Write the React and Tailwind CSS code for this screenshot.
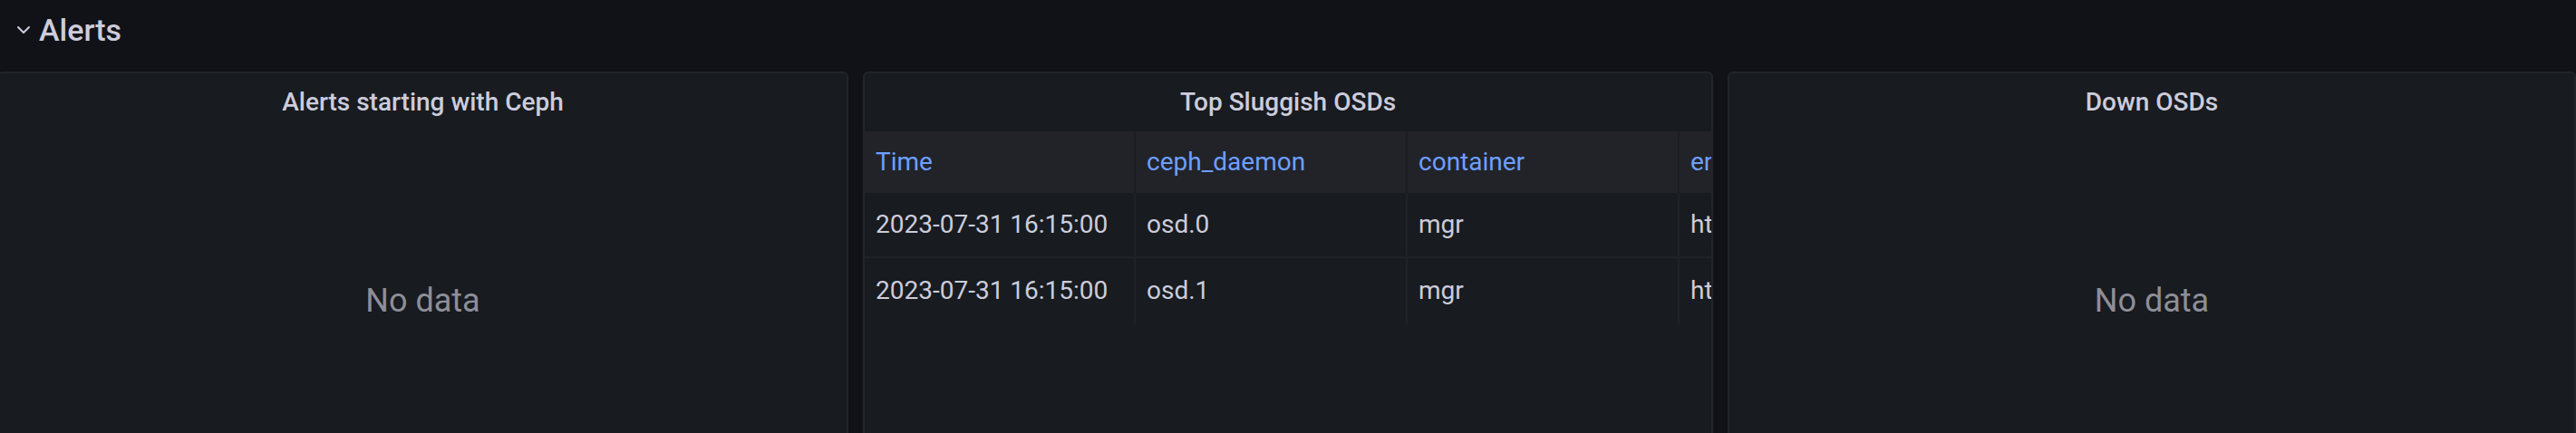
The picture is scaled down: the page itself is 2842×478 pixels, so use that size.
import React from "react";

const columns = ["Time", "ceph_daemon", "container", "endpoint"];

const rows = [
  ["2023-07-31 16:15:00", "osd.0", "mgr", "http://ceph-mgr:9283/metrics"],
  ["2023-07-31 16:15:00", "osd.1", "mgr", "http://ceph-mgr:9283/metrics"],
];

function Chevron() {
  return (
    <svg width="16" height="10" viewBox="0 0 16 10" fill="none" className="shrink-0">
      <path d="M2 2 L8 8 L14 2" stroke="#ccccdc" strokeWidth="2" strokeLinecap="round" strokeLinejoin="round" />
    </svg>
  );
}

function Panel({ title, children }) {
  return (
    <div className="h-[436px] flex flex-col overflow-hidden rounded-[6px] border-2 border-[#222429] bg-[#181b1f]">
      <div className="h-[64px] shrink-0 flex items-center justify-center text-[28px] font-medium text-[#ccccdc]">
        {title}
      </div>
      {children}
    </div>
  );
}

function NoData() {
  return (
    <div className="flex-1 pt-[5px] flex items-center justify-center text-[36px] text-[#8e8e98]">No data</div>
  );
}

function SluggishTable() {
  return (
    <div className="flex-1 overflow-hidden">
      <div className="w-[1200px]">
        {/* header */}
        <div className="flex h-[68px] bg-[#212329]">
          {columns.map((c, i) => (
            <div
              key={c}
              className={
                (i === 0 ? "w-[299px] " : "w-[300px] ") +
                "shrink-0 flex items-center pl-[12px] border-r-2 border-[#1b1d22] text-[28px] text-[#6e9fff]"
              }
            >
              {c}
            </div>
          ))}
        </div>
        {/* body */}
        {rows.map((r, ri) => (
          <div
            key={ri}
            className={"flex h-[72px] " + (ri === 0 ? "border-b-2 border-[#202227]" : "")}
          >
            {r.map((v, i) => (
              <div
                key={i}
                className={
                  (i === 0 ? "w-[299px] " : "w-[300px] ") +
                  "shrink-0 flex items-center pl-[12px] border-r-2 border-[#202227] text-[28px] text-[#ccccdc] whitespace-nowrap overflow-hidden"
                }
              >
                {v}
              </div>
            ))}
          </div>
        ))}
      </div>
    </div>
  );
}

export default function App() {
  return (
    <div
      className="w-[2842px] h-[478px] overflow-hidden bg-[#111217]"
      style={{ fontFamily: "Roboto, 'Liberation Sans', sans-serif" }}
    >
      <div className="h-[79px] pb-[14px] pl-[18px] flex items-center gap-[9px]">
        <Chevron />
        <span className="text-[34px] font-medium text-[#ccccdc] leading-none">Alerts</span>
      </div>
      <div className="-ml-[3px] grid grid-cols-[939px_938px_936px] gap-[16px]">
        <Panel title="Alerts starting with Ceph">
          <NoData />
        </Panel>
        <Panel title="Top Sluggish OSDs">
          <SluggishTable />
        </Panel>
        <Panel title="Down OSDs">
          <NoData />
        </Panel>
      </div>
    </div>
  );
}
